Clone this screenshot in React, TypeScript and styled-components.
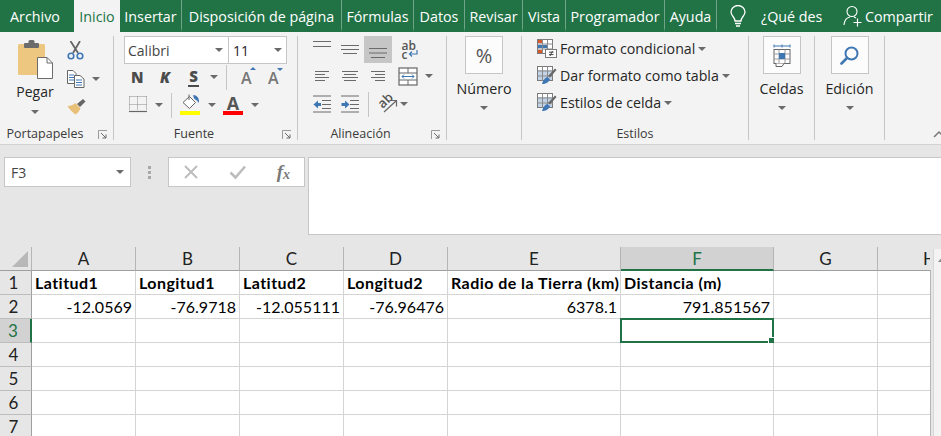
import React from "react";
import styled, { createGlobalStyle } from "styled-components";

const GlobalStyle = createGlobalStyle`
	html, body {
		margin: 0;
		padding: 0;
		height: 436px;
		overflow: hidden;
		background: #e6e6e6;
	}
	* {
		box-sizing: border-box;
	}
`;

const UI_FONT = `"Open Sans", "Noto Sans", sans-serif`;
const GRAY = "#6a6a6a";
const BLUE = "#3f77b5";
const GREEN = "#217346";

const TABS = [
	{ label: "Archivo", width: 70 },
	{ label: "Inicio", width: 46, active: true },
	{ label: "Insertar", width: 61 },
	{ label: "Disposición de página", width: 160 },
	{ label: "Fórmulas", width: 72 },
	{ label: "Datos", width: 51 },
	{ label: "Revisar", width: 58 },
	{ label: "Vista", width: 43 },
	{ label: "Programador", width: 99 },
	{ label: "Ayuda", width: 53 },
];

const COLUMNS = [
	{ name: "A", width: 104 },
	{ name: "B", width: 104 },
	{ name: "C", width: 104 },
	{ name: "D", width: 104 },
	{ name: "E", width: 173 },
	{ name: "F", width: 153, selected: true },
	{ name: "G", width: 104 },
	{ name: "H", width: 104 },
];

const ROWS: string[][] = [
	["Latitud1", "Longitud1", "Latitud2", "Longitud2", "Radio de la Tierra (km)", "Distancia (m)", "", ""],
	["-12.0569", "-76.9718", "-12.055111", "-76.96476", "6378.1", "791.851567", "", ""],
	["", "", "", "", "", "", "", ""],
	["", "", "", "", "", "", "", ""],
	["", "", "", "", "", "", "", ""],
	["", "", "", "", "", "", "", ""],
	["", "", "", "", "", "", "", ""],
];

function Lines({ rows, top = 1, step = 4 }: { rows: [number, number][]; top?: number; step?: number }) {
	return (
		<Svg width={18} height={18} viewBox="0 0 18 18">
			{rows.map(([x, w], i) => (
				<rect key={i} x={x} y={top + i * step} width={w} height={1} fill={GRAY} />
			))}
		</Svg>
	);
}

function Launcher() {
	return (
		<LauncherBox viewBox="0 0 10 10" width={10} height={10}>
			<path d="M0.5 9V0.5H9" fill="none" stroke="#9a9a9a" />
			<path d="M3 3L8 8M8 4.5V8H4.5" fill="none" stroke="#6a6a6a" />
		</LauncherBox>
	);
}

function LargeDrop({ label, children }: { label: string; children: React.ReactNode }) {
	return (
		<DropColumn>
			<DropBox>{children}</DropBox>
			<DropLabel>{label}</DropLabel>
			<Caret />
		</DropColumn>
	);
}

function Table({ variant }: { variant: "format" | "table" | "style" }) {
	return (
		<Svg width={20} height={19} viewBox="0 0 20 19">
			<rect x="0.5" y="0.5" width="15" height="14" fill="#fff" stroke="#7a7a7a" />
			{variant !== "format" && <rect x="1" y="4" width="14" height="10" fill="#c3d3e6" />}
			<path d="M0.5 5H16M0.5 10H16M5.5 0.5V15M10.5 0.5V15" stroke="#8a8a8a" fill="none" />
			{variant === "format" ? (
				<>
					<rect x="1" y="1" width="4" height="3" fill="#d9582b" />
					<rect x="6" y="6" width="4" height="3" fill="#3f77b5" />
					<rect x="1" y="6" width="4" height="3" fill="#3f77b5" />
					<rect x="1" y="11" width="4" height="3" fill="#d9582b" />
					<rect x="8.5" y="10.5" width="11" height="8" fill="#fff" stroke="#7a7a7a" />
					<path d="M12 13.2H16.5M12 15.6H16.5M15.5 12L13 17" stroke="#444" fill="none" />
				</>
			) : (
				<>
					<path d="M11 10L18 2.5L19.5 4L13 11.5Z" fill="#666" />
					<path d="M5 18C6 14 8 12 10 11L13 13C12 16 9 18 5 18Z" fill={BLUE} />
				</>
			)}
		</Svg>
	);
}

export default function App() {
	return (
		<Window>
			<GlobalStyle />
			<TabBar>
				{TABS.map((tab, i) => (
					<Tab
						key={tab.label}
						$width={tab.width}
						$active={tab.active}
						$divider={i >= 3}
						$last={i === TABS.length - 1}
					>
						{tab.label}
					</Tab>
				))}
				<TellMe>
					<Svg width={16} height={23} viewBox="0 0 16 23">
						<path
							d="M5 16C5 12 1 11 1 7A7 6.5 0 0 1 15 7C15 11 11 12 11 16Z"
							fill="none"
							stroke="#fff"
							strokeWidth="1.3"
						/>
						<path d="M5 18.5H11M6 21H10" stroke="#fff" strokeWidth="1.3" />
					</Svg>
					<span>¿Qué des</span>
				</TellMe>
				<Share>
					<Svg width={20} height={22} viewBox="0 0 20 22">
						<circle cx="9" cy="6.5" r="5" fill="none" stroke="#fff" strokeWidth="1.1" />
						<path d="M1 20C1.5 15 4 12.5 7 12M11 12L13 13" fill="none" stroke="#fff" strokeWidth="1.1" />
						<path d="M14.5 13.5V21.5M10.5 17.5H18.5" stroke="#fff" strokeWidth="1.2" />
					</Svg>
					<span>Compartir</span>
				</Share>
			</TabBar>

			<Ribbon>
				<Group $width={114}>
					<GroupBody>
						<PasteButton>
							<Svg width={36} height={39} viewBox="0 0 36 39">
								<rect x="1" y="4" width="27" height="31" rx="1.5" fill="#edc67f" />
								<rect x="7" y="3" width="15" height="5" rx="1" fill="#6b6b6b" />
								<rect x="11.5" y="0" width="6" height="5" rx="1.5" fill="#6b6b6b" />
								<path d="M20.5 17.5H30L35.5 23V38.5H20.5Z" fill="#fff" stroke="#6b6b6b" />
								<path d="M30 17.5V23H35.5" fill="none" stroke="#6b6b6b" />
							</Svg>
							<PasteLabel>Pegar</PasteLabel>
							<Caret />
						</PasteButton>
						<SmallColumn>
							<Svg width={17} height={19} viewBox="0 0 17 19">
								<path d="M3.5 0L11 12M13 0L6 12" stroke="#666" strokeWidth="1.8" fill="none" />
								<circle cx="4" cy="15" r="2.8" fill="none" stroke={BLUE} strokeWidth="1.6" />
								<circle cx="13" cy="15" r="2.8" fill="none" stroke={BLUE} strokeWidth="1.6" />
							</Svg>
							<SmallRow>
								<Svg width={18} height={18} viewBox="0 0 18 18">
									<path d="M0.5 0.5H6L9 3.5V13.5H0.5Z" fill="#fff" stroke="#666" />
									<path d="M2 5H7M2 7.5H7M2 10H7" stroke={BLUE} />
									<path d="M7.5 5.5H13L17 9V17.5H7.5Z" fill="#fff" stroke="#666" />
									<path d="M9 10H15M9 12.5H15M9 15H15" stroke={BLUE} />
								</Svg>
								<Caret />
							</SmallRow>
							<Svg width={19} height={17} viewBox="0 0 19 17">
								<path d="M10 6L16 1L18.5 3.5L13 9Z" fill="#666" />
								<path d="M0.5 8C4 8 7 6.5 8.5 5L13.5 10.5C12.5 13 10.5 15.5 8.5 16.5C5.5 14.5 2.5 11.5 0.5 8Z" fill="#e8c078" />
							</Svg>
						</SmallColumn>
					</GroupBody>
					<Footer>
						<FooterLabel>Portapapeles</FooterLabel>
						<Launcher />
					</Footer>
				</Group>

				<Group $width={184}>
					<FontColumn>
						<FontPicker>
							<FontName>
								Calibri
								<Caret />
							</FontName>
							<FontSize>
								11
								<Caret />
							</FontSize>
						</FontPicker>
						<FontRow $height={26}>
							<StyleLetter $x={2} $width={12}>N</StyleLetter>
							<StyleLetter $x={16} $width={12} $italic>K</StyleLetter>
							<StyleLetter $x={17} $width={11} $underline>S</StyleLetter>
							<CaretSlot $x={11}><Caret /></CaretSlot>
							<RowDivider $x={8} />
							<GrowLetter $x={14}>
								A<GrowMark $down={false} />
							</GrowLetter>
							<GrowLetter $x={13}>
								A<GrowMark $down />
							</GrowLetter>
						</FontRow>
						<FontRow $height={30}>
							<Svg width={18} height={18} viewBox="0 0 18 18">
								<path
									d="M0.5 0.5H17.5M0.5 8.5H17.5M0.5 0.5V14M8.5 0.5V14M17.5 0.5V14"
									stroke="#8a8a8a"
									strokeDasharray="1 1"
									fill="none"
								/>
								<path d="M0 15.5H18" stroke="#666" strokeWidth="1.2" />
							</Svg>
							<CaretSlot $x={8}><Caret /></CaretSlot>
							<RowDivider $x={8} />
							<ColorIcon $x={8} $color="#ffff00">
								<Svg width={20} height={17} viewBox="0 0 20 17">
									<path d="M3 8.5L9.5 2.5L15.5 8.5L9.5 14.5Z" fill="#fff" stroke="#666" />
									<path d="M9 0.5V6" stroke="#666" />
									<path d="M13 1C17 1 19.5 4 19 9C18 7.5 16.5 6 14 4.5Z" fill={BLUE} />
								</Svg>
							</ColorIcon>
							<CaretSlot $x={8}><Caret /></CaretSlot>
							<ColorIcon $x={7} $color="#ff0000">
								<ColorLetter>A</ColorLetter>
							</ColorIcon>
							<CaretSlot $x={8}><Caret /></CaretSlot>
						</FontRow>
					</FontColumn>
					<Footer>
						<FooterLabel>Fuente</FooterLabel>
						<Launcher />
					</Footer>
				</Group>

				<Group $width={149}>
					<AlignColumn>
						<AlignRow $height={27}>
							<AlignButton>
								<Lines rows={[[0, 18], [0, 18]]} top={0} step={5} />
							</AlignButton>
							<AlignButton>
								<Lines rows={[[0, 18], [0, 18], [2, 14]]} top={4} />
							</AlignButton>
							<AlignButton $active>
								<Lines rows={[[0, 18], [0, 18], [2, 14]]} top={7} step={4.5} />
							</AlignButton>
							<WrapButton>
								<WrapGlyph>
									<span>ab</span>
									<WrapLine>
										c
										<Svg width={10} height={8} viewBox="0 0 10 8">
											<path d="M9 0V4H2M4 1.5L1.5 4L4 6.5" fill="none" stroke={BLUE} strokeWidth="1.2" />
										</Svg>
									</WrapLine>
								</WrapGlyph>
							</WrapButton>
						</AlignRow>
						<AlignRow $height={26}>
							<AlignButton>
								<Lines rows={[[2, 14], [2, 10], [2, 14], [2, 10]]} top={4} step={3} />
							</AlignButton>
							<AlignButton>
								<Lines rows={[[1, 16], [3, 12], [1, 16], [3, 12]]} top={4} step={3} />
							</AlignButton>
							<AlignButton>
								<Lines rows={[[2, 14], [6, 10], [2, 14], [6, 10]]} top={4} step={3} />
							</AlignButton>
							<WrapButton>
								<Svg width={20} height={19} viewBox="0 0 20 19">
									<rect x="1" y="1" width="18" height="17" fill="#fff" stroke="#666" strokeWidth="1.2" />
									<path d="M1 6H19M1 13H19M10 1V6M10 13V18" stroke="#666" />
									<path d="M4 9.5H16M6 7.5L4 9.5L6 11.5M14 7.5L16 9.5L14 11.5" stroke={BLUE} fill="none" />
								</Svg>
							</WrapButton>
							<CaretSlot $x={3}><Caret /></CaretSlot>
						</AlignRow>
						<AlignRow $height={30}>
							<AlignButton>
								<Svg width={18} height={18} viewBox="0 0 18 18">
									<path d="M0 1H18M9 5.5H18M9 9.5H18M9 13.5H18M0 17H18" stroke={GRAY} />
									<path d="M0.5 9.5L5 5.5V8H8V11H5V13.5Z" fill={BLUE} />
								</Svg>
							</AlignButton>
							<AlignButton>
								<Svg width={18} height={18} viewBox="0 0 18 18">
									<path d="M0 1H18M9 5.5H18M9 9.5H18M9 13.5H18M0 17H18" stroke={GRAY} />
									<path d="M8.5 9.5L4 5.5V8H0.5V11H4V13.5Z" fill={BLUE} />
								</Svg>
							</AlignButton>
							<RowDivider $x={4} />
							<OrientationIcon>
								<OrientationText>ab</OrientationText>
								<Svg width={22} height={20} viewBox="0 0 22 20">
									<path d="M7 18L19 7M13.5 6.5H19.5V12.5" stroke="#666" strokeWidth="1.2" fill="none" />
								</Svg>
							</OrientationIcon>
							<CaretSlot $x={1}><Caret /></CaretSlot>
						</AlignRow>
					</AlignColumn>
					<Footer>
						<FooterLabel>Alineación</FooterLabel>
						<Launcher />
					</Footer>
				</Group>

				<Group $width={75}>
					<LargeDrop label="Número">
						<PercentGlyph>%</PercentGlyph>
					</LargeDrop>
				</Group>

				<Group $width={227}>
					<StyleList>
						<StyleItem>
							<Table variant="format" />
							Formato condicional
							<Caret />
						</StyleItem>
						<StyleItem>
							<Table variant="table" />
							Dar formato como tabla
							<Caret />
						</StyleItem>
						<StyleItem>
							<Table variant="style" />
							Estilos de celda
							<Caret />
						</StyleItem>
					</StyleList>
					<Footer>
						<FooterLabel>Estilos</FooterLabel>
					</Footer>
				</Group>

				<Group $width={66}>
					<LargeDrop label="Celdas">
						<Svg width={18} height={23} viewBox="0 0 18 23">
							<path d="M1 2H17M1 0.5V3.5M17 0.5V3.5M9 0.5V3.5" stroke={BLUE} fill="none" />
							<rect x="1" y="5.5" width="16" height="14" fill="#fff" stroke="#666" />
							<path d="M1 10H17M1 15H17M6 5.5V19.5M12 5.5V19.5" stroke="#9a9a9a" />
							<rect x="6" y="9" width="6" height="6" fill={BLUE} />
							<path d="M3 19.5V22.5H9L11 19.5" fill="#fff" stroke="#666" />
						</Svg>
					</LargeDrop>
				</Group>

				<Group $width={70}>
					<LargeDrop label="Edición">
						<Svg width={19} height={19} viewBox="0 0 19 19">
							<circle cx="11.5" cy="7.5" r="6" fill="none" stroke={BLUE} strokeWidth="2" />
							<path d="M7 12L1.5 17.5" stroke={BLUE} strokeWidth="2.6" strokeLinecap="round" />
						</Svg>
					</LargeDrop>
				</Group>

				<Collapse>
					<Svg width={12} height={8} viewBox="0 0 12 8">
						<path d="M1 7L6 2L11 7" fill="none" stroke="#777" strokeWidth="1.5" />
					</Svg>
				</Collapse>
			</Ribbon>

			<FormulaBar>
				<NameBox>
					F3
					<Caret />
				</NameBox>
				<Grip>
					<i />
					<i />
					<i />
				</Grip>
				<FormulaButtons>
					<Svg width={16} height={16} viewBox="0 0 16 16">
						<path d="M2 2L14 14M14 2L2 14" stroke="#bdbdbd" strokeWidth="2" />
					</Svg>
					<Svg width={18} height={16} viewBox="0 0 18 16">
						<path d="M1.5 8.5L6.5 13.5L16 2.5" stroke="#bdbdbd" strokeWidth="2.6" fill="none" />
					</Svg>
					<FxLabel>
						f<sub>x</sub>
					</FxLabel>
				</FormulaButtons>
				<FormulaInput />
			</FormulaBar>

			<SheetArea>
				<Sheet>
					<Corner>
						<Svg width={16} height={16} viewBox="0 0 16 16">
							<path d="M16 0V16H0Z" fill="#b8b8b8" />
						</Svg>
					</Corner>
					{COLUMNS.map((col) => (
						<ColumnHead key={col.name} $width={col.width} $selected={col.selected}>
							{col.name}
						</ColumnHead>
					))}
					{ROWS.map((row, r) => (
						<React.Fragment key={r}>
							<RowHead $selected={r === 2}>{r + 1}</RowHead>
							{row.map((value, c) => (
								<Cell key={c} $bold={r === 0} $active={r === 2 && c === 5}>
									{value}
								</Cell>
							))}
						</React.Fragment>
					))}
				</Sheet>
				<ScrollGutter />
				<ScrollBar>
					<Svg width={7} height={5} viewBox="0 0 7 5">
						<path d="M0 5L3.5 1L7 5Z" fill="#8a8a8a" />
					</Svg>
				</ScrollBar>
			</SheetArea>
		</Window>
	);
}

const Window = styled.div`
	width: 941px;
	height: 436px;
	overflow: hidden;
	display: flex;
	flex-direction: column;
	background: #e6e6e6;
	font-family: ${UI_FONT};
	color: #262626;
`;

const Svg = styled.svg`
	display: block;
	flex-shrink: 0;
`;

const Caret = styled.span`
	display: inline-block;
	flex-shrink: 0;
	width: 0;
	height: 0;
	border-left: 4px solid transparent;
	border-right: 4px solid transparent;
	border-top: 4px solid ${GRAY};
`;

const TabBar = styled.div`
	height: 32px;
	flex-shrink: 0;
	display: flex;
	align-items: stretch;
	background: ${GREEN};
	color: #fff;
	font-size: 14.3px;
`;

const Tab = styled.div<{ $width: number; $active?: boolean; $divider: boolean; $last: boolean }>`
	width: ${(p) => p.$width}px;
	margin-left: ${(p) => (p.$active ? "4px" : "0")};
	display: flex;
	align-items: center;
	justify-content: center;
	white-space: nowrap;
	background: ${(p) => (p.$active ? "#f3f3f3" : "transparent")};
	color: ${(p) => (p.$active ? GREEN : "#fff")};
	border-left: ${(p) => (p.$divider ? "1px solid #6fa488" : "none")};
	border-right: ${(p) => (p.$last ? "1px solid #6fa488" : "none")};
	border-bottom: ${(p) => (p.$active ? "none" : `4px solid ${GREEN}`)};
	padding-top: ${(p) => (p.$active ? "0" : "4px")};
`;

const TellMe = styled.div`
	display: flex;
	align-items: center;
	gap: 15px;
	padding-left: 13px;
	width: 126px;
	white-space: nowrap;
`;

const Share = styled.div`
	display: flex;
	align-items: center;
	gap: 2px;
	white-space: nowrap;
`;

const Ribbon = styled.div`
	height: 113px;
	flex-shrink: 0;
	display: flex;
	align-items: flex-start;
	padding-top: 4px;
	background: #f3f3f3;
	border-bottom: 1px solid #d2d2d2;
`;

const Group = styled.div<{ $width: number }>`
	width: ${(p) => p.$width}px;
	height: 104px;
	flex-shrink: 0;
	display: flex;
	flex-direction: column;
	border-right: 1px solid #c6c6c6;
`;

const GroupBody = styled.div`
	flex: 1;
	display: flex;
	padding: 4px 0 0 10px;
	gap: 6px;
`;

const Footer = styled.div`
	height: 18px;
	flex-shrink: 0;
	margin-top: auto;
	margin-bottom: -3px;
	display: flex;
	align-items: center;
	font-size: 12.5px;
	line-height: 18px;
`;

const FooterLabel = styled.span`
	flex: 1;
	text-align: center;
	color: #3a3a3a;
	white-space: nowrap;
`;

const LauncherBox = styled.svg`
	display: block;
	margin: 1px 5px 0 8px;
`;

const PasteButton = styled.div`
	width: 50px;
	display: flex;
	flex-direction: column;
	align-items: center;
`;

const PasteLabel = styled.div`
	font-size: 14px;
	line-height: 20px;
	margin: 3px 0 8px;
`;

const SmallColumn = styled.div`
	display: flex;
	flex-direction: column;
	gap: 10px;
	padding-left: 1px;
	padding-top: 1px;
`;

const SmallRow = styled.div`
	display: flex;
	align-items: center;
	gap: 7px;
`;

const FontColumn = styled.div`
	flex: 1;
	display: flex;
	flex-direction: column;
	padding-left: 10px;
`;

const FontPicker = styled.div`
	width: 163px;
	height: 28px;
	display: flex;
	gap: 1px;
	background: #c6c6c6;
	border: 1px solid #c6c6c6;
	font-size: 14px;
`;

const FontName = styled.div`
	width: 103px;
	background: #fff;
	display: flex;
	align-items: center;
	justify-content: space-between;
	padding: 0 5px 0 3px;
	color: #444;
`;

const FontSize = styled(FontName)`
	flex: 1;
	width: auto;
	padding-left: 4px;
	padding-right: 4px;
	color: #262626;
`;

const FontRow = styled.div<{ $height: number }>`
	height: ${(p) => p.$height}px;
	display: flex;
	align-items: center;
	padding-left: 5px;
`;

const StyleLetter = styled.span<{ $x: number; $width: number; $italic?: boolean; $underline?: boolean }>`
	width: ${(p) => p.$width}px;
	margin-left: ${(p) => p.$x}px;
	font-family: "Open Sans", sans-serif;
	font-weight: 800;
	font-size: 15px;
	line-height: 18px;
	color: #4c4c4c;
	text-align: center;
	font-style: ${(p) => (p.$italic ? "italic" : "normal")};
	border-bottom: ${(p) => (p.$underline ? "2px solid #4c4c4c" : "none")};
`;

const CaretSlot = styled.span<{ $x: number }>`
	display: flex;
	align-items: center;
	margin-left: ${(p) => p.$x}px;
`;

const RowDivider = styled.span<{ $x: number }>`
	width: 1px;
	height: 25px;
	background: #c6c6c6;
	margin-left: ${(p) => p.$x}px;
`;

const GrowLetter = styled.span<{ $x: number }>`
	position: relative;
	margin-left: ${(p) => p.$x}px;
	font-size: 16px;
	line-height: 18px;
	width: 14px;
	font-weight: 600;
	color: #777;
	padding-top: 2px;
`;

const GrowMark = styled.i<{ $down: boolean }>`
	position: absolute;
	top: ${(p) => (p.$down ? "1px" : "0")};
	left: 9px;
	width: 0;
	height: 0;
	border-left: 3px solid transparent;
	border-right: 3px solid transparent;
	${(p) => (p.$down ? `border-top: 3px solid ${BLUE};` : `border-bottom: 3px solid ${BLUE};`)}
`;

const ColorIcon = styled.div<{ $x: number; $color: string }>`
	width: 20px;
	height: 24px;
	margin-left: ${(p) => p.$x}px;
	margin-bottom: 4px;
	display: flex;
	flex-direction: column;
	justify-content: flex-end;
	align-items: center;
	border-bottom: 4px solid ${(p) => p.$color};
`;

const ColorLetter = styled.span`
	font-size: 18px;
	line-height: 16px;
	font-weight: 700;
	color: #555;
`;

const AlignColumn = styled.div`
	flex: 1;
	display: flex;
	flex-direction: column;
	padding-left: 10px;
`;

const AlignRow = styled.div<{ $height: number }>`
	height: ${(p) => p.$height}px;
	display: flex;
	align-items: center;
`;

const AlignButton = styled.div<{ $active?: boolean }>`
	width: 28px;
	height: 27px;
	flex-shrink: 0;
	display: flex;
	align-items: center;
	justify-content: center;
	background: ${(p) => (p.$active ? "#c6c6c6" : "transparent")};
`;

const WrapButton = styled(AlignButton)`
	margin-left: 2px;
`;

const WrapGlyph = styled.div`
	display: flex;
	flex-direction: column;
	font-size: 12px;
	line-height: 9px;
	font-weight: 600;
	color: #555;
	margin-left: 4px;
`;

const WrapLine = styled.span`
	display: flex;
	align-items: center;
	gap: 1px;
`;

const OrientationIcon = styled.div`
	position: relative;
	width: 22px;
	height: 20px;
	margin-left: 8px;
`;

const OrientationText = styled.span`
	position: absolute;
	left: 0;
	top: -3px;
	font-size: 13px;
	font-weight: 600;
	color: #555;
	transform: rotate(-45deg);
`;

const DropColumn = styled.div`
	flex: 1;
	display: flex;
	flex-direction: column;
	align-items: center;
`;

const DropBox = styled.div`
	width: 38px;
	height: 38px;
	display: flex;
	align-items: center;
	justify-content: center;
	background: #fcfcfc;
	border: 1px solid #c6c6c6;
`;

const DropLabel = styled.div`
	font-size: 14.3px;
	line-height: 20px;
	margin: 5px 0 7px;
`;

const PercentGlyph = styled.span`
	font-size: 20px;
	color: #555;
`;

const StyleList = styled.div`
	flex: 1;
	display: flex;
	flex-direction: column;
	gap: 8px;
	padding: 3px 0 0 15px;
`;

const StyleItem = styled.div`
	height: 19px;
	display: flex;
	align-items: center;
	gap: 3px;
	font-size: 14.2px;
	white-space: nowrap;
`;

const Collapse = styled.div`
	flex: 1;
	align-self: flex-end;
	display: flex;
	justify-content: flex-end;
	margin-bottom: 6px;
	margin-right: -4px;
`;

const FormulaBar = styled.div`
	height: 102px;
	flex-shrink: 0;
	display: flex;
	align-items: flex-start;
	padding: 12px 0 0 4px;
	font-size: 14px;
`;

const NameBox = styled.div`
	width: 127px;
	height: 30px;
	padding: 0 6px;
	display: flex;
	align-items: center;
	justify-content: space-between;
	background: #fff;
	border: 1px solid #c6c6c6;
	color: #444;
`;

const Grip = styled.div`
	width: 37px;
	height: 30px;
	display: flex;
	flex-direction: column;
	align-items: center;
	justify-content: center;
	gap: 2px;

	i {
		display: block;
		width: 3px;
		height: 3px;
		background: #a8a8a8;
	}
`;

const FormulaButtons = styled.div`
	width: 137px;
	height: 30px;
	display: flex;
	align-items: center;
	justify-content: space-between;
	padding: 0 14px;
	background: #fff;
	border: 1px solid #c6c6c6;
`;

const FxLabel = styled.span`
	font-family: "Liberation Serif", serif;
	font-style: italic;
	font-weight: 700;
	font-size: 19px;
	line-height: 20px;
	color: #7a7a7a;

	sub {
		font-size: 14px;
		vertical-align: -1px;
		line-height: 0;
	}
`;

const FormulaInput = styled.div`
	flex: 1;
	height: 78px;
	margin-left: 3px;
	background: #fff;
	border: 1px solid #c6c6c6;
	border-right: none;
`;

const SheetArea = styled.div`
	flex: 1;
	min-height: 0;
	display: flex;
`;

const Sheet = styled.div`
	width: 930px;
	flex-shrink: 0;
	overflow: hidden;
	display: grid;
	grid-template-columns: 32px repeat(4, 104px) 173px 153px 104px 104px;
	grid-auto-rows: 24px;
	font-family: Lato, "Liberation Sans", sans-serif;
	font-size: 16px;
	color: #000;
`;

const Corner = styled.div`
	display: flex;
	align-items: flex-end;
	justify-content: flex-end;
	padding: 0 3px 3px 0;
	background: #e6e6e6;
	border-right: 1px solid #b5b5b5;
	border-bottom: 1px solid #9f9f9f;
`;

const ColumnHead = styled.div<{ $width: number; $selected?: boolean }>`
	width: ${(p) => p.$width}px;
	display: flex;
	align-items: center;
	justify-content: center;
	font-size: 17px;
	background: ${(p) => (p.$selected ? "#d2d2d2" : "#e6e6e6")};
	color: ${(p) => (p.$selected ? GREEN : "#222")};
	border-right: 1px solid #b5b5b5;
	border-bottom: ${(p) => (p.$selected ? `2px solid ${GREEN}` : "1px solid #9f9f9f")};
`;

const RowHead = styled.div<{ $selected?: boolean }>`
	display: flex;
	align-items: center;
	justify-content: center;
	font-size: 17px;
	padding-right: 4px;
	background: ${(p) => (p.$selected ? "#d2d2d2" : "#e6e6e6")};
	color: ${(p) => (p.$selected ? GREEN : "#222")};
	border-right: ${(p) => (p.$selected ? `2px solid ${GREEN}` : "1px solid #9f9f9f")};
	border-bottom: 1px solid #bdbdbd;
`;

const Cell = styled.div<{ $bold: boolean; $active: boolean }>`
	position: relative;
	display: flex;
	align-items: center;
	justify-content: ${(p) => (p.$bold ? "flex-start" : "flex-end")};
	padding: 0 3px;
	white-space: nowrap;
	font-weight: ${(p) => (p.$bold ? 700 : 400)};
	letter-spacing: ${(p) => (p.$bold ? "0.45px" : "0")};
	background: #fff;
	border-right: 1px solid #d4d4d4;
	border-bottom: 1px solid #d4d4d4;

	${(p) =>
		p.$active &&
		`
		&::before {
			content: "";
			position: absolute;
			left: -1px;
			top: -1px;
			right: -1px;
			bottom: -1px;
			border: 2px solid ${GREEN};
		}
		&::after {
			content: "";
			position: absolute;
			right: -4px;
			bottom: -4px;
			width: 7px;
			height: 7px;
			background: ${GREEN};
			border: 1px solid #fff;
		}
	`}
`;

const ScrollGutter = styled.div`
	width: 3px;
	margin-top: 23px;
	border-left: 1px solid #b5b5b5;
`;

const ScrollBar = styled.div`
	flex: 1;
	display: flex;
	padding: 8px 0 0 4px;
	margin-top: 2px;
	overflow: hidden;
	background: #f3f3f3;
	border-left: 1px solid #d8d8d8;
`;
